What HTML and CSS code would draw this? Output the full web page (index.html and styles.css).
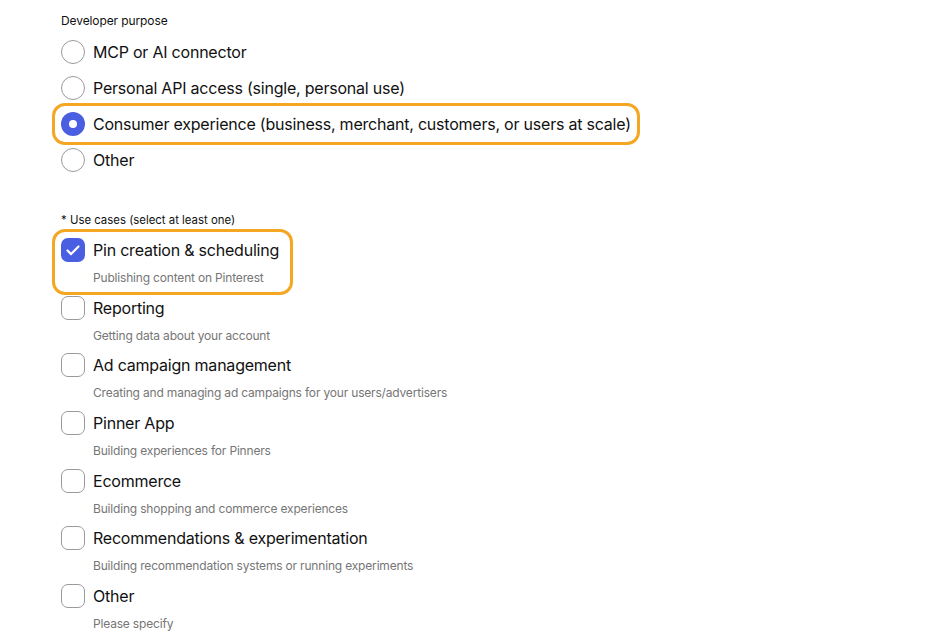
FILE: index.html
```html
<!DOCTYPE html>
<html lang="en">
<head>
<meta charset="utf-8">
<title>Developer purpose</title>
<link rel="stylesheet" href="styles.css">
</head>
<body>
<main class="form">
  <section class="group">
    <div class="group-label">Developer purpose</div>
    <div class="radio-list">
      <label class="radio-row"><span class="radio"></span><span class="opt-text">MCP or AI connector</span></label>
      <label class="radio-row"><span class="radio"></span><span class="opt-text">Personal API access (single, personal use)</span></label>
      <label class="radio-row highlight"><span class="radio checked"></span><span class="opt-text">Consumer experience (business, merchant, customers, or users at scale)</span></label>
      <label class="radio-row"><span class="radio"></span><span class="opt-text">Other</span></label>
    </div>
  </section>

  <section class="group group-usecases">
    <div class="group-label small">* Use cases (select at least one)</div>
    <div class="check-list">
      <div class="check-item highlight wide">
        <div class="check-row"><span class="checkbox checked"><svg viewBox="0 0 24 24" width="24" height="24"><path d="M6.5 12.5l3.6 3.6 7.4-7.6" fill="none" stroke="#fff" stroke-width="2.2" stroke-linecap="round" stroke-linejoin="round"/></svg></span><span class="opt-text">Pin creation &amp; scheduling</span></div>
        <div class="desc">Publishing content on Pinterest</div>
      </div>
      <div class="check-item">
        <div class="check-row"><span class="checkbox"></span><span class="opt-text">Reporting</span></div>
        <div class="desc">Getting data about your account</div>
      </div>
      <div class="check-item">
        <div class="check-row"><span class="checkbox"></span><span class="opt-text">Ad campaign management</span></div>
        <div class="desc">Creating and managing ad campaigns for your users/advertisers</div>
      </div>
      <div class="check-item">
        <div class="check-row"><span class="checkbox"></span><span class="opt-text">Pinner App</span></div>
        <div class="desc">Building experiences for Pinners</div>
      </div>
      <div class="check-item">
        <div class="check-row"><span class="checkbox"></span><span class="opt-text">Ecommerce</span></div>
        <div class="desc">Building shopping and commerce experiences</div>
      </div>
      <div class="check-item">
        <div class="check-row"><span class="checkbox"></span><span class="opt-text">Recommendations &amp; experimentation</span></div>
        <div class="desc">Building recommendation systems or running experiments</div>
      </div>
      <div class="check-item">
        <div class="check-row"><span class="checkbox"></span><span class="opt-text">Other</span></div>
        <div class="desc">Please specify</div>
      </div>
    </div>
  </section>
</main>
</body>
</html>
```

FILE: styles.css
```css
html, body {
  margin: 0;
  padding: 0;
  background: #ffffff;
}
body {
  font-family: Inter, "Noto Sans", "Liberation Sans", sans-serif;
  color: #111111;
  width: 925px;
  height: 640px;
  overflow: hidden;
}
.form {
  padding: 13px 0 0 61px;
  display: flex;
  flex-direction: column;
}
.group-label {
  font-size: 12px;
  line-height: 16px;
  color: #111111;
  letter-spacing: -0.1px;
}
.group-label.small {
  font-size: 11.4px;
  letter-spacing: 0;
}
.radio-list {
  margin-top: 11px;
  display: flex;
  flex-direction: column;
  gap: 12px;
}
.radio-row {
  display: flex;
  align-items: center;
  gap: 8px;
  height: 24px;
  width: fit-content;
}
.opt-text {
  font-size: 16px;
  line-height: 20px;
  color: #111111;
  white-space: nowrap;
  letter-spacing: -0.22px;
}
.radio {
  width: 24px;
  height: 24px;
  box-sizing: border-box;
  border: 1px solid #9a9a9a;
  border-radius: 50%;
  flex: none;
  background: #fff;
  display: flex;
  align-items: center;
  justify-content: center;
}
.radio.checked {
  border: none;
  background: #4a5ee2;
}
.radio.checked::after {
  content: "";
  width: 8px;
  height: 8px;
  border-radius: 50%;
  background: #ffffff;
}
.highlight {
  outline: 3px solid #f5a623;
  outline-offset: 6px;
  border-radius: 4px;
}
.highlight.wide {
  padding-right: 5px;
}
.group-usecases {
  margin-top: 40px;
}
.check-list {
  margin-top: 10px;
  display: flex;
  flex-direction: column;
  gap: 9.67px;
}
.check-item {
  display: flex;
  flex-direction: column;
  width: fit-content;
}
.check-row {
  display: flex;
  align-items: center;
  gap: 8px;
  height: 24px;
}
.checkbox {
  width: 24px;
  height: 24px;
  box-sizing: border-box;
  border: 1px solid #9a9a9a;
  border-radius: 7px;
  flex: none;
  background: #fff;
  display: flex;
}
.checkbox.checked {
  border: none;
  background: #4a5ee2;
}
.desc {
  margin: 8px 0 0 32px;
  font-size: 12px;
  line-height: 16px;
  color: #767676;
  white-space: nowrap;
  letter-spacing: -0.18px;
}
```
